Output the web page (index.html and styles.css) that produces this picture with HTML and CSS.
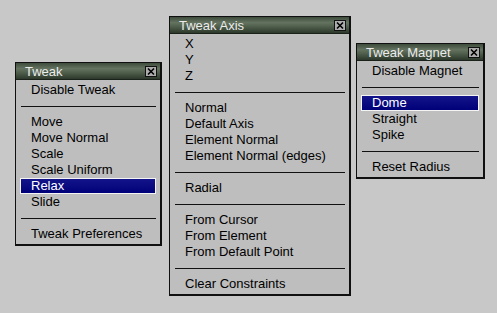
FILE: index.html
```html
<!DOCTYPE html>
<html lang="en">
  <head>
    <meta charset="UTF-8" />
    <title>Tweak Menus</title>
    <link rel="stylesheet" href="styles.css">
  </head>
  <body>
    <div class="desktop">
      <div class="menu menu-tweak">
        <div class="title">
          <span>Tweak</span>
          <svg class="close" width="12" height="11" viewBox="0 0 12 11">
            <rect x="0.5" y="0.5" width="11" height="10" fill="#adadad" stroke="#111" />
            <path d="M3 2.5 L9 8.5 M9 2.5 L3 8.5" stroke="#000" stroke-width="1.6" />
          </svg>
        </div>
        <ul class="items">
          <li>Disable Tweak</li>
          <li class="sep"></li>
          <li>Move</li>
          <li>Move Normal</li>
          <li>Scale</li>
          <li>Scale Uniform</li>
          <li class="active">Relax</li>
          <li>Slide</li>
          <li class="sep"></li>
          <li>Tweak Preferences</li>
        </ul>
      </div>

      <div class="menu menu-axis">
        <div class="title">
          <span>Tweak Axis</span>
          <svg class="close" width="12" height="11" viewBox="0 0 12 11">
            <rect x="0.5" y="0.5" width="11" height="10" fill="#adadad" stroke="#111" />
            <path d="M3 2.5 L9 8.5 M9 2.5 L3 8.5" stroke="#000" stroke-width="1.6" />
          </svg>
        </div>
        <ul class="items">
          <li>X</li>
          <li>Y</li>
          <li>Z</li>
          <li class="sep"></li>
          <li>Normal</li>
          <li>Default Axis</li>
          <li>Element Normal</li>
          <li>Element Normal (edges)</li>
          <li class="sep"></li>
          <li>Radial</li>
          <li class="sep"></li>
          <li>From Cursor</li>
          <li>From Element</li>
          <li>From Default Point</li>
          <li class="sep"></li>
          <li>Clear Constraints</li>
        </ul>
      </div>

      <div class="menu menu-magnet">
        <div class="title">
          <span>Tweak Magnet</span>
          <svg class="close" width="12" height="11" viewBox="0 0 12 11">
            <rect x="0.5" y="0.5" width="11" height="10" fill="#adadad" stroke="#111" />
            <path d="M3 2.5 L9 8.5 M9 2.5 L3 8.5" stroke="#000" stroke-width="1.6" />
          </svg>
        </div>
        <ul class="items">
          <li>Disable Magnet</li>
          <li class="sep"></li>
          <li class="active">Dome</li>
          <li>Straight</li>
          <li>Spike</li>
          <li class="sep"></li>
          <li>Reset Radius</li>
        </ul>
      </div>
    </div>
  </body>
</html>
```

FILE: styles.css
```css
body {
  margin: 0;
  background: #c8c8c8;
  font-family: "Liberation Sans", Arial, sans-serif;
  font-size: 13px;
}

.desktop {
  position: relative;
  width: 497px;
  height: 313px;
}

/* windows sit at their own spots on the desktop */
.menu {
  position: absolute;
  box-sizing: border-box;
  background: #bebebe;
  border: 1px solid #101010;
  border-right-width: 2px;
  border-bottom-width: 2px;
}

.menu-tweak {
  left: 15px;
  top: 62px;
  width: 147px;
}

.menu-axis {
  left: 169px;
  top: 16px;
  width: 182px;
}

.menu-magnet {
  left: 356px;
  top: 43px;
  width: 129px;
}

.title {
  display: flex;
  align-items: center;
  justify-content: space-between;
  height: 16px;
  padding: 0 3px 0 9px;
  color: #ececec;
  border-bottom: 1px solid #1a221a;
  background: linear-gradient(#3e4c3c 0%, #63735f 35%, #4f5f4c 60%, #2c382b 100%);
}

.close {
  display: block;
}

.items {
  list-style: none;
  margin: 0;
  padding: 2px 0;
}

.items li {
  height: 16px;
  line-height: 16px;
  padding-left: 15px;
  color: #000;
  white-space: nowrap;
}

.items li.active {
  box-sizing: border-box;
  margin: 0 4px;
  padding-left: 10px;
  line-height: 14px;
  color: #fff;
  border: 1px solid #f4f4f4;
  background: linear-gradient(#14148a, #000078);
}

.items li.sep {
  display: flex;
  align-items: center;
  padding: 0 4px 0 5px;
}

.items li.sep::before {
  content: "";
  flex: 1;
  height: 1px;
  background: #111;
}
```
